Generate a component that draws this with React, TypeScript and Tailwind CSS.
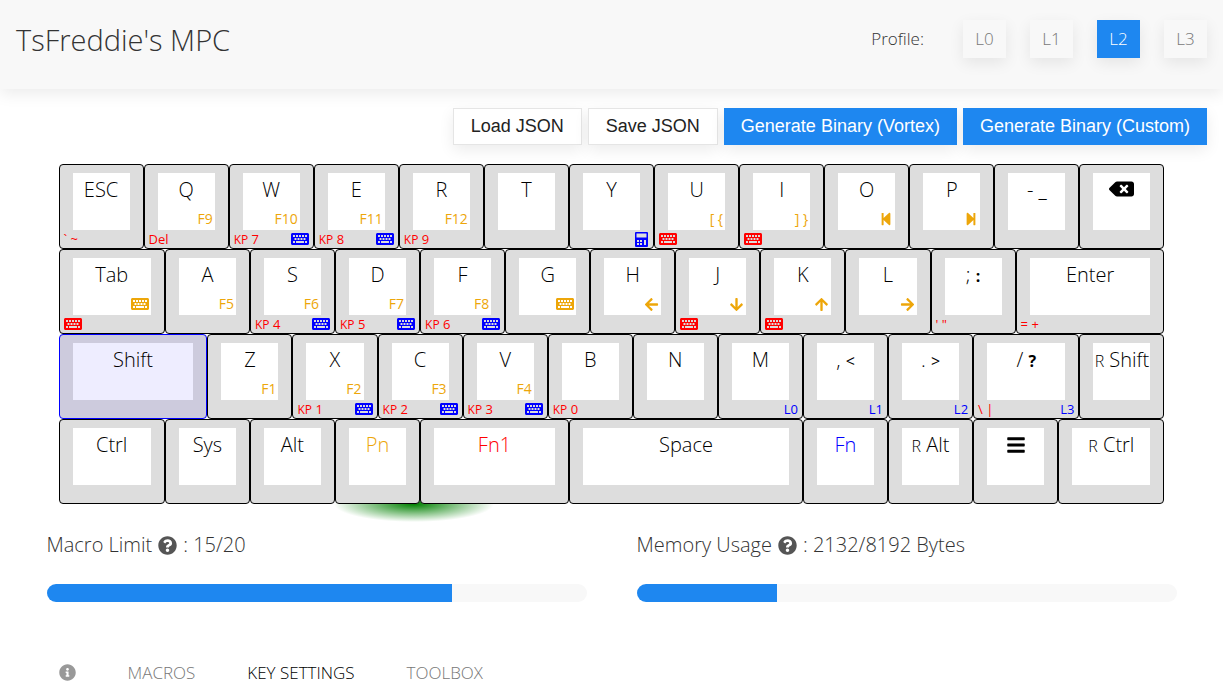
import type { ReactNode } from 'react';
import {
  FaArrowDown,
  FaArrowLeft,
  FaArrowRight,
  FaArrowUp,
  FaBackspace,
  FaBars,
  FaInfoCircle,
  FaKeyboard,
  FaQuestionCircle,
  FaStepBackward,
  FaStepForward,
} from 'react-icons/fa';

type KeyDef = {
  id: string;
  main: ReactNode;
  span?: string;
  tone?: string;
  pn?: ReactNode;
  fn1?: ReactNode;
  fn?: ReactNode;
  selected?: boolean;
};

const kb = <FaKeyboard className="h-4 w-[18px]" aria-label="Macro" />;

function CalculatorIcon() {
  return (
    <svg viewBox="0 0 13 15" className="mr-px h-[15px] w-[13px]" fill="currentColor" aria-label="Calculator">
      <path
        fillRule="evenodd"
        d="M1 0h11a1 1 0 0 1 1 1v13a1 1 0 0 1-1 1H1a1 1 0 0 1-1-1V1a1 1 0 0 1 1-1zM1.500 1.500v4h10v-4zM2 8v2h2v-2zM5 8v2h2v-2zM2 11v2h2v-2zM5 11v2h2v-2zM9 8v5h2V8z"
      />
    </svg>
  );
}

function Kp({ n }: { n: number }) {
  return (
    <>
      <span className="text-xs">KP</span> {n}
    </>
  );
}

function Pair({ a, b, bold = false }: { a: string; b: string; bold?: boolean }) {
  return (
    <>
      {a} <span className={bold ? 'text-base font-bold' : 'text-base font-normal'}>{b}</span>
    </>
  );
}

function Right({ children }: { children: string }) {
  return (
    <>
      <span className="text-base">R</span> {children}
    </>
  );
}

const keys: KeyDef[] = [
  { id: 'esc', main: 'ESC', fn1: '` ~' },
  { id: 'q', main: 'Q', pn: 'F9', fn1: 'Del' },
  { id: 'w', main: 'W', pn: 'F10', fn1: <Kp n={7} />, fn: kb },
  { id: 'e', main: 'E', pn: 'F11', fn1: <Kp n={8} />, fn: kb },
  { id: 'r', main: 'R', pn: 'F12', fn1: <Kp n={9} /> },
  { id: 't', main: 'T' },
  { id: 'y', main: 'Y', fn: <CalculatorIcon /> },
  { id: 'u', main: 'U', pn: '[ {', fn1: kb },
  { id: 'i', main: 'I', pn: '] }', fn1: kb },
  { id: 'o', main: 'O', pn: <FaStepBackward aria-label="Previous track" /> },
  { id: 'p', main: 'P', pn: <FaStepForward aria-label="Next track" /> },
  { id: 'minus', main: '- _' },
  { id: 'backspace', main: <FaBackspace className="-mt-[2px] h-5 w-[25px]" aria-label="Backspace" /> },

  { id: 'tab', main: 'Tab', span: 'col-span-5', pn: kb, fn1: kb },
  { id: 'a', main: 'A', pn: 'F5' },
  { id: 's', main: 'S', pn: 'F6', fn1: <Kp n={4} />, fn: kb },
  { id: 'd', main: 'D', pn: 'F7', fn1: <Kp n={5} />, fn: kb },
  { id: 'f', main: 'F', pn: 'F8', fn1: <Kp n={6} />, fn: kb },
  { id: 'g', main: 'G', pn: kb },
  { id: 'h', main: 'H', pn: <FaArrowLeft className="text-[15px]" aria-label="Left" /> },
  { id: 'j', main: 'J', pn: <FaArrowDown className="text-[15px]" aria-label="Down" />, fn1: kb },
  { id: 'k', main: 'K', pn: <FaArrowUp className="text-[15px]" aria-label="Up" />, fn1: kb },
  { id: 'l', main: 'L', pn: <FaArrowRight className="text-[15px]" aria-label="Right" /> },
  { id: 'semicolon', main: <Pair a=";" b=":" bold />, fn1: '\' "' },
  { id: 'enter', main: 'Enter', span: 'col-span-7', fn1: '= +' },

  { id: 'shift', main: 'Shift', span: 'col-span-7', selected: true },
  { id: 'z', main: 'Z', pn: 'F1' },
  { id: 'x', main: 'X', pn: 'F2', fn1: <Kp n={1} />, fn: kb },
  { id: 'c', main: 'C', pn: 'F3', fn1: <Kp n={2} />, fn: kb },
  { id: 'v', main: 'V', pn: 'F4', fn1: <Kp n={3} />, fn: kb },
  { id: 'b', main: 'B', fn1: <Kp n={0} /> },
  { id: 'n', main: 'N' },
  { id: 'm', main: 'M', fn: 'L0' },
  { id: 'comma', main: <Pair a="," b="<" />, fn: 'L1' },
  { id: 'period', main: <Pair a="." b=">" />, fn: 'L2' },
  { id: 'slash', main: <Pair a="/" b="?" bold />, span: 'col-span-5', fn1: '\\ |', fn: 'L3' },
  { id: 'rshift', main: <Right>Shift</Right> },

  { id: 'ctrl', main: 'Ctrl', span: 'col-span-5' },
  { id: 'sys', main: 'Sys' },
  { id: 'alt', main: 'Alt' },
  { id: 'pn', main: 'Pn', tone: 'text-[#eda60a]' },
  { id: 'fn1', main: 'Fn1', span: 'col-span-7', tone: 'text-[#ff0000]' },
  { id: 'space', main: 'Space', span: 'col-span-11' },
  { id: 'fn', main: 'Fn', tone: 'text-[#0000ff]' },
  { id: 'ralt', main: <Right>Alt</Right> },
  { id: 'menu', main: <FaBars aria-label="Menu" /> },
  { id: 'rctrl', main: <Right>Ctrl</Right>, span: 'col-span-5' },
];

function Key({ k }: { k: KeyDef }) {
  return (
    <button
      type="button"
      aria-pressed={!!k.selected}
      className={`flex h-[85px] min-w-0 flex-col rounded border pt-2 ${k.span ?? 'col-span-4'} ${
        k.selected ? 'border-[#0000ff] bg-[#cdcbdd]' : 'border-black bg-[#dddddd]'
      }`}
    >
      <span
        className={`mx-[13px] flex h-[57px] flex-col items-center justify-between self-stretch ${
          k.selected ? 'bg-[#eeedff]' : 'bg-white'
        }`}
      >
        <span className={`flex h-[34px] items-center whitespace-pre text-xl ${k.tone ?? 'text-black'}`}>
          <span>{k.main}</span>
        </span>
        <span className="flex h-[22px] items-center self-end pr-[2px] text-sm font-normal text-[#eda60a]">{k.pn}</span>
      </span>
      <span className="flex h-[18px] items-center justify-between self-stretch px-1 text-[13px] leading-[18px] font-normal">
        <span className="whitespace-pre text-[#ff0000]">{k.fn1}</span>
        <span className="text-[#0000ff]">{k.fn}</span>
      </span>
    </button>
  );
}

function Meter({ label, value, percent }: { label: string; value: string; percent: number }) {
  return (
    <section>
      <h2 className="flex items-center gap-[6px] text-xl leading-7">
        {label}
        <FaQuestionCircle className="text-[19px] text-[#555555]" aria-hidden />
        <span>: {value}</span>
      </h2>
      <div
        role="progressbar"
        aria-label={label}
        aria-valuenow={percent}
        aria-valuemin={0}
        aria-valuemax={100}
        className="mt-[25px] h-[18px] overflow-hidden rounded-full bg-[#f8f8f8]"
      >
        <div className="h-full bg-[#1e87f0]" style={{ width: `${percent}%` }} />
      </div>
    </section>
  );
}

const profiles = ['L0', 'L1', 'L2', 'L3'];
const shadow = 'shadow-[0_5px_15px_rgba(0,0,0,0.08)]';

export default function App() {
  return (
    <div className="bg-white font-['Open_Sans','Noto_Sans',sans-serif] font-light text-[#333333]">
      <header className={`flex h-[89px] items-start justify-between bg-[#f8f8f8] px-4 pt-5 ${shadow}`}>
        <h1 className="text-[29px] leading-10">TsFreddie's MPC</h1>
        <nav aria-label="Profile" className="flex items-center gap-6">
          <span className="mr-[15px] text-[17px]">Profile:</span>
          {profiles.map((p) => (
            <button
              key={p}
              type="button"
              className={`h-[38px] w-[43px] text-[17px] ${shadow} ${
                p === 'L2' ? 'bg-[#1e87f0] text-white' : 'bg-[#f8f8f8] text-[#777777]'
              }`}
            >
              {p}
            </button>
          ))}
        </nav>
      </header>

      <div className="flex flex-wrap justify-end gap-[6px] px-4 pt-[19px] font-['Liberation_Sans',Arial,sans-serif] text-lg leading-6 font-normal">
        {['Load JSON', 'Save JSON'].map((t) => (
          <button key={t} type="button" className={`h-[37px] border border-[#e5e5e5] bg-white px-[17px] pb-[2px] text-[#222222] ${shadow}`}>
            {t}
          </button>
        ))}
        {['Generate Binary (Vortex)', 'Generate Binary (Custom)'].map((t) => (
          <button key={t} type="button" className={`h-[37px] bg-[#1e87f0] px-[17px] pb-[2px] text-white ${shadow}`}>
            {t}
          </button>
        ))}
      </div>

      <main className="px-4 pt-[19px]">
        <div className="relative isolate mx-auto max-w-[1106px]">
          <div className="absolute -bottom-[18px] left-[275px] -z-10 h-9 w-40 bg-[radial-gradient(closest-side,#008000,transparent)]" />
          <div className="grid grid-cols-[repeat(52,minmax(0,1fr))]">
            {keys.map((k) => (
              <Key key={k.id} k={k} />
            ))}
          </div>
        </div>

        <div className="mx-auto mt-[27px] grid max-w-[1130px] grid-cols-2 gap-[50px]">
          <Meter label="Macro Limit" value="15/20" percent={75} />
          <Meter label="Memory Usage" value="2132/8192 Bytes" percent={26} />
        </div>

        <nav aria-label="Sections" className="mx-auto mt-[59px] flex max-w-[1106px] items-center gap-[52px] text-[17px] leading-[23px] text-[#777777]">
          <a href="#info" aria-label="Info">
            <FaInfoCircle className="text-[#999999]" />
          </a>
          <a href="#macros">MACROS</a>
          <a href="#keys" className="text-black">
            KEY SETTINGS
          </a>
          <a href="#toolbox">TOOLBOX</a>
        </nav>
      </main>
    </div>
  );
}
